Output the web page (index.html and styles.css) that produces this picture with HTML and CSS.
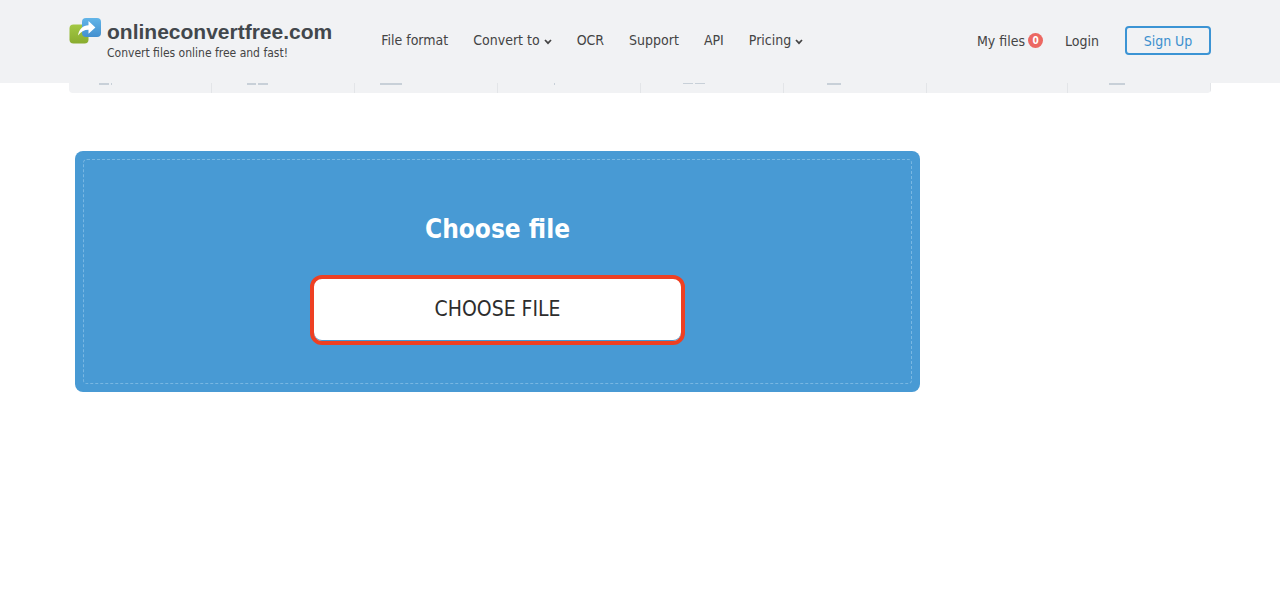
FILE: index.html
```html
<!DOCTYPE html>
<html lang="en">
<head>
    <meta charset="UTF-8">
    <meta name="viewport" content="width=device-width, initial-scale=1.0">
    <title>onlineconvertfree.com</title>
    <link rel="stylesheet" href="styles.css">
</head>
<body>
    <header class="header">
        <div class="container header-row">
            <a class="logo" href="#">
                <svg class="logo-icon" viewBox="0 0 32 26" aria-hidden="true">
                    <defs>
                        <linearGradient id="green" x1="0" y1="0" x2="0" y2="1">
                            <stop offset="0" stop-color="#a3c844"/>
                            <stop offset="1" stop-color="#89ac2f"/>
                        </linearGradient>
                        <linearGradient id="blue" x1="0" y1="0" x2="0" y2="1">
                            <stop offset="0" stop-color="#62b5e8"/>
                            <stop offset="1" stop-color="#438fcf"/>
                        </linearGradient>
                    </defs>
                    <rect x="0.5" y="6.5" width="19" height="19" rx="4" fill="url(#green)"/>
                    <rect x="13" y="0" width="19" height="19" rx="4" fill="url(#blue)"/>
                    <path d="M9 17.5C10 11 14 7.3 19.5 7.2V3L26.4 9.4L19.5 15.8V11.8C15 11.8 12 13.6 9 17.5Z" fill="#fff"/>
                </svg>
                <span class="logo-text">
                    <span class="logo-name">onlineconvertfree.com</span>
                    <span class="logo-slogan">Convert files online free and fast!</span>
                </span>
            </a>
            <nav class="menu">
                <a href="#">File format</a>
                <a href="#">Convert to
                    <svg class="arrow" viewBox="0 0 8 6"><path d="M1 1L4 4.2L7 1"/></svg>
                </a>
                <a href="#">OCR</a>
                <a href="#">Support</a>
                <a href="#">API</a>
                <a href="#">Pricing
                    <svg class="arrow" viewBox="0 0 8 6"><path d="M1 1L4 4.2L7 1"/></svg>
                </a>
            </nav>
            <div class="user">
                <a class="my-files" href="#">My files <span class="count">0</span></a>
                <a href="#">Login</a>
                <button class="sign-up" type="button">Sign Up</button>
            </div>
        </div>
    </header>

    <main class="container">
        <!-- bottom edge of the format tabs, the rest is under the header -->
        <div class="tabs">
            <div class="tab"><svg viewBox="0 0 142 10"><path d="M30 0h10v2h-10zM42 0h1v2h-1z"/></svg></div>
            <div class="tab"><svg viewBox="0 0 142 10"><path d="M35 0h9v2h-9zM46 0h10v2h-10z"/></svg></div>
            <div class="tab"><svg viewBox="0 0 142 10"><path d="M25 0h22v2h-22z"/></svg></div>
            <div class="tab"><svg viewBox="0 0 142 10"><path d="M56 0h1v2h-1z"/></svg></div>
            <div class="tab"><svg viewBox="0 0 142 10"><path d="M42 0h10v1h-10zM54 0h10v1h-10z"/></svg></div>
            <div class="tab"><svg viewBox="0 0 142 10"><path d="M43 0h14v2h-14z"/></svg></div>
            <div class="tab"></div>
            <div class="tab"><svg viewBox="0 0 142 10"><path d="M41 0h16v2h-16z"/></svg></div>
        </div>

        <section class="upload">
            <div class="drop-area">
                <h1>Choose file</h1>
                <button class="choose" type="button">CHOOSE FILE</button>
            </div>
        </section>
    </main>
</body>
</html>
```
FILE: styles.css
```css
* {
    box-sizing: border-box;
}

body {
    margin: 0;
    background: #fff;
    color: #444;
    font-family: "DejaVu Sans Condensed", Tahoma, sans-serif;
    font-size: 14px;
}

a {
    color: inherit;
    text-decoration: none;
}

button {
    font-family: inherit;
    cursor: pointer;
}

.container {
    max-width: 1142px;
    margin: 0 auto;
}

.header {
    background: #f1f2f4;
    padding: 18px 0;
}

.header-row {
    display: flex;
    align-items: flex-start;
    height: 47px;
}

.logo {
    display: flex;
    gap: 6px;
}

.logo-icon {
    width: 32px;
    height: 26px;
}

.logo-text {
    display: flex;
    flex-direction: column;
}

.logo-name {
    font: bold 21px/28px "Liberation Sans", Arial, sans-serif;
    color: #42474c;
}

.logo-slogan {
    font-size: 12px;
    line-height: 14px;
}

.menu {
    display: flex;
    gap: 25px;
    margin-left: 49px;
    line-height: 44px;
}

.arrow {
    width: 8px;
    height: 6px;
    fill: none;
    stroke: #444;
    stroke-width: 1.7;
}

.user {
    display: flex;
    align-items: center;
    gap: 22px;
    height: 45px;
    margin-left: auto;
}

.my-files {
    display: flex;
    align-items: center;
    gap: 3px;
}

.count {
    width: 15px;
    height: 15px;
    border-radius: 50%;
    background: #ec6862;
    color: #fff;
    font-size: 10px;
    font-weight: bold;
    line-height: 15px;
    text-align: center;
}

.sign-up {
    width: 86px;
    height: 29px;
    margin-left: 4px;
    padding: 0;
    border: 2px solid #3c94d4;
    border-radius: 4px;
    background: none;
    color: #3c8fce;
    font-size: 14px;
}

.tabs {
    display: flex;
    height: 10px;
    overflow: hidden;
    border-radius: 0 0 4px 4px;
    background: #f1f2f4;
}

.tab {
    flex: 1;
    border-right: 1px solid #e3e5e8;
}

.tab svg {
    display: block;
    height: 10px;
    fill: #c8d0d8;
}

.upload {
    width: 74%;
    margin: 58px 6px 0;
    padding: 8px;
    border-radius: 8px;
    background: #489ad4;
}

.drop-area {
    display: flex;
    flex-direction: column;
    align-items: center;
    padding: 51px 20px 38px;
    border: 1px dashed #78b7e2;
    border-radius: 4px;
}

h1 {
    margin: 0 0 28px;
    color: #fff;
    font-size: 26px;
    line-height: 36px;
}

.choose {
    width: 375px;
    max-width: 100%;
    height: 70px;
    padding: 0 0 2px;
    border: 4px solid #ee4023;
    border-radius: 12px;
    background: #fff;
    color: #2d2d2d;
    font-size: 21px;
    box-shadow: inset 0 -1px 0 #489ad4;
}
```
